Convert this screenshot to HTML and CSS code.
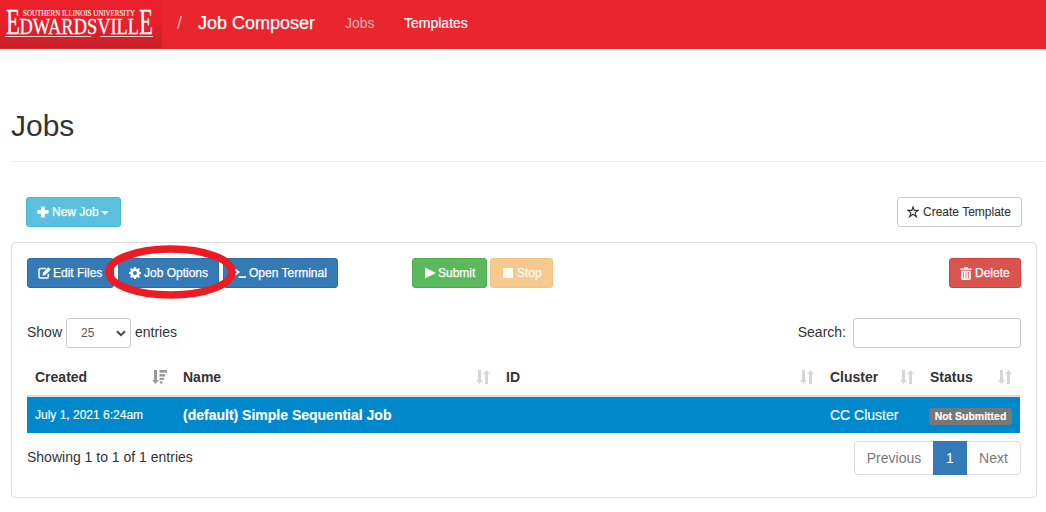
FILE: index.html
```html
<!DOCTYPE html>
<html lang="en">
<head>
<meta charset="utf-8">
<title>Job Composer</title>
<link rel="stylesheet" href="styles.css">
</head>
<body>
<svg class="defs" width="0" height="0">
  <symbol id="sort" viewBox="0 0 14 14"><path d="M2 0h3v10h2l-3.500 4L0 10h2zM9 14h3V4h2l-3.500-4L7 4h2z"/></symbol>
</svg>
<header class="navbar">
  <a class="logo">
    <svg width="162" height="48" viewBox="0 0 162 48" aria-label="Southern Illinois University Edwardsville">
      <g class="logo-text">
        <text class="logo-top" x="23" y="15.800" font-size="8.800" textLength="112" lengthAdjust="spacingAndGlyphs">SOUTHERN ILLINOIS UNIVERSITY</text>
        <text x="6" y="34" font-size="35" textLength="14" lengthAdjust="spacingAndGlyphs">E</text>
        <text x="19.500" y="34" font-size="24" textLength="119.500" lengthAdjust="spacingAndGlyphs">DWARDSVILL</text>
        <text x="139" y="34" font-size="35" textLength="14" lengthAdjust="spacingAndGlyphs">E</text>
      </g>
      <path d="M5 36.500h86M100 36.500h53" stroke="#fbc9cb"/>
    </svg>
  </a>
  <span class="slash">/</span>
  <a class="brand">Job Composer</a>
  <a class="nav-jobs">Jobs</a>
  <a class="nav-templates">Templates</a>
</header>
<main>
  <h1>Jobs</h1>
  <div class="actions">
    <button class="btn info"><svg width="12" height="12"><path d="M4 .5h3.800v3.600h3.700v3.600H7.800v3.800H4V7.700H.3V4.100H4z"/></svg><span>New Job</span><i class="caret"></i></button>
    <button class="btn plain"><svg width="12" height="12" viewBox="0 0 12 12"><path d="M6 .8l1.200 3.600h4L8 6.600l1.400 4.200L6 8.200l-3.400 2.600L4 6.600.8 4.400h4z" fill="none" stroke="#333" stroke-width="1.100"/></svg><span>Create Template</span></button>
  </div>
  <section class="panel">
    <div class="toolbar">
      <button class="btn primary edit"><svg width="13" height="12" viewBox="0 0 13 12"><path d="M8 1.500H3Q1 1.500 1 3.300v5.900Q1 11 3 11h5.500q1.800 0 1.800-1.800V7" fill="none" stroke="#fff" stroke-width="1.500"/><path d="M4.500 8.700l.5-2.900L10.300.2l2.500 2.300L7.300 8z"/></svg><span>Edit Files</span></button>
      <button class="btn primary options"><svg width="12" height="12" viewBox="0 0 12 12"><path d="M5 0h2l.3 1.700 1 .4L9.700 1 11 2.300 10 3.700l.4 1L12 5v2l-1.600.3-.4 1 1 1.400L9.700 11l-1.400-1-1 .4L7 12H5l-.3-1.600-1-.4-1.400 1L1 9.700l1-1.400-.4-1L0 7V5l1.600-.3.4-1-1-1.400L2.300 1l1.400 1 1-.4zM6 4a2 2 0 100 4 2 2 0 000-4z" fill-rule="evenodd"/></svg><span>Job Options</span></button>
      <button class="btn primary terminal"><svg width="13" height="12" viewBox="0 0 13 12"><path d="M1 2l4.500 3L1 8.500M5.500 10.200H13" fill="none" stroke="#fff" stroke-width="1.800"/></svg><span>Open Terminal</span></button>
      <button class="btn success"><svg width="11" height="12"><path d="M0 .5L11 6 0 11.500z"/></svg><span>Submit</span></button>
      <button class="btn warning"><svg width="10" height="10"><path d="M0 0h10v10H0z"/></svg><span>Stop</span></button>
      <button class="btn danger"><svg width="12" height="13" viewBox="0 0 12 13"><path d="M.3 3V1.500H4V0h4v1.500h3.700V3zM1.200 3.800h9.600v7.700q0 1.500-1.500 1.500H2.700q-1.500 0-1.500-1.500z"/><path d="M3.500 5v6.500M6 5v6.500M8.500 5v6.500" stroke="#d9534f" stroke-width=".7"/></svg><span>Delete</span></button>
      <svg class="highlight" width="132" height="56" viewBox="0 0 132 56"><ellipse cx="65.500" cy="28" rx="61.500" ry="23" fill="none" stroke="#ed1c24" stroke-width="7.500"/></svg>
    </div>
    <div class="filters">
      <span class="show">Show</span>
      <div class="select"><span>25</span><svg width="10" height="7" viewBox="0 0 10 7"><path d="M1 1.200l4 4 4-4" fill="none" stroke="#444" stroke-width="2"/></svg></div>
      <span class="raised">entries</span>
      <label class="search"><span class="raised">Search:</span><input type="text"></label>
    </div>
    <div class="row head">
      <div><span>Created</span><svg class="active-sort" width="15" height="14"><path d="M2 0h3v10h2l-3.500 4L0 10h2zM7.500 0H15v2.800H7.500zM7.500 4h5.700v2.500H7.500zM7.500 7.700H12V10H7.500zM8 11.300h2.500v2.200H8z"/></svg></div>
      <div><span>Name</span><svg width="14" height="14"><use href="#sort"/></svg></div>
      <div><span>ID</span><svg width="14" height="14"><use href="#sort"/></svg></div>
      <div><span>Cluster</span><svg width="14" height="14"><use href="#sort"/></svg></div>
      <div><span>Status</span><svg width="14" height="14"><use href="#sort"/></svg></div>
    </div>
    <div class="row selected">
      <div class="date"><span>July 1, 2021 6:24am</span></div>
      <div class="job"><span>(default) Simple Sequential Job</span></div>
      <div></div>
      <div><span>CC Cluster</span></div>
      <div><span class="badge">Not Submitted</span></div>
    </div>
    <div class="footer">
      <span class="info-text">Showing 1 to 1 of 1 entries</span>
      <nav class="pages"><a class="prev">Previous</a><a class="current">1</a><a class="next">Next</a></nav>
    </div>
  </section>
</main>
</body>
</html>
```
FILE: styles.css
```css
* { box-sizing: border-box; }
body { margin: 0; height: 512px; overflow: hidden; background: #fff; color: #333; font: 14px/20px "Liberation Sans", Arial, sans-serif; }
.defs { position: absolute; }
svg { flex: none; fill: currentColor; }
span, a { white-space: nowrap; }
.navbar { display: flex; align-items: center; height: 49px; padding-bottom: 3px; background: #e9252f; color: #fff; }
.logo { width: 162px; height: 48px; margin-top: 2px; background: linear-gradient(#e9202a 0 45%, #c6202a); }
.logo svg { display: block; overflow: visible; }
.logo-text { font-family: "Liberation Serif", serif; fill: #fff; stroke: #fff; stroke-width: .3px; }
.logo-top { stroke-width: .1px; }
.slash { width: 21px; margin-left: 15px; font-size: 18px; color: #ddb1b3; }
.brand { width: 147px; font-size: 18px; -webkit-text-stroke: .25px #fff; }
.nav-jobs { width: 59px; color: #dab4b6; }
.nav-templates { -webkit-text-stroke: .2px #fff; }
main { padding-left: 11px; }
h1 { margin: 0; height: 113px; padding-top: 60px; border-bottom: 1px solid #eee; font-size: 30px; font-weight: 400; line-height: 33px; }
.actions { display: flex; justify-content: space-between; margin: 35px 24px 15px 15px; }
.btn { display: flex; align-items: center; gap: 3px; height: 30px; padding: 0 10px; border: 1px solid; border-radius: 3px; font: 12px/18px "Liberation Sans", Arial, sans-serif; color: #fff; -webkit-text-stroke: .25px currentColor; }
.info { width: 95px; background: #5bc0de; border-color: #46b8da; }
.caret { border: 4px solid transparent; border-top-color: #fff; border-bottom: 0; margin-left: -1px; margin-top: 2px; }
.plain { width: 125px; padding-left: 9px; gap: 4px; background: #fff; border-color: #ccc; color: #333; -webkit-text-stroke-width: .1px; }
.panel { width: 1026px; height: 256px; padding: 15px; border: 1px solid #ddd; border-radius: 4px; }
.toolbar { position: relative; display: flex; height: 30px; }
.primary { background: #337ab7; border-color: #2e6da4; }
.edit { width: 87px; margin-right: 4px; gap: 2px; }
.options { width: 101px; margin-right: 4px; }
.terminal { width: 115px; padding-left: 9px; }
.success { width: 75px; margin-left: 74px; background: #5cb85c; border-color: #4cae4c; }
.success, .warning { padding-left: 12px; gap: 2px; }
.warning { width: 63px; margin-left: 3px; gap: 4px; background: #f6ca8f; border-color: #f5c27d; color: #fffaf2; }
.danger { width: 72px; margin-left: auto; background: #d9534f; border-color: #d43f3a; }
.highlight { position: absolute; left: 78px; top: -14px; }
.filters { display: flex; align-items: center; height: 30px; margin-top: 30px; }
.show { width: 39px; padding-bottom: 2px; }
.raised { padding-bottom: 2px; }
.select { display: flex; align-items: center; justify-content: space-between; width: 65px; height: 30px; padding: 0 4px 0 14px; margin-right: 4px; border: 1px solid #ccc; border-radius: 3px; font-size: 12px; color: #555; }
.search { display: flex; align-items: center; gap: 7px; margin-left: auto; }
input { width: 168px; height: 30px; border: 1px solid #ccc; border-radius: 3px; padding: 0 10px; background: #fff; }
.row { display: grid; grid-template-columns: 148px 323px 324px 100px 98px; width: 993px; align-items: center; }
.row > div { display: flex; align-items: center; justify-content: space-between; padding: 0 8px; }
.head { height: 49px; padding-top: 11px; border-bottom: 2px solid #ddd; font-weight: 700; }
.head svg { color: #d6d6d6; }
.head .active-sort { color: #999; }
.selected { height: 36px; background: #0088cc; color: #fff; -webkit-text-stroke: .15px #fff; }
.date { font-size: 12px; }
.job { font-weight: 700; }
.badge { width: 84px; height: 17px; margin-left: -1px; margin-top: 3px; border-radius: 3px; background: #777; text-align: center; font-size: 10.500px; line-height: 17px; font-weight: 700; }
.footer { display: flex; justify-content: space-between; height: 42px; padding-top: 8px; }
.info-text { padding-top: 6px; }
.pages { display: flex; height: 34px; border: 1px solid #ddd; border-radius: 4px; width: 167px; color: #777; line-height: 32px; text-align: center; }
.prev { width: 78px; }
.current { width: 34px; height: 34px; margin-top: -1px; background: #337ab7; color: #fff; line-height: 34px; }
.next { width: 53px; }
```
